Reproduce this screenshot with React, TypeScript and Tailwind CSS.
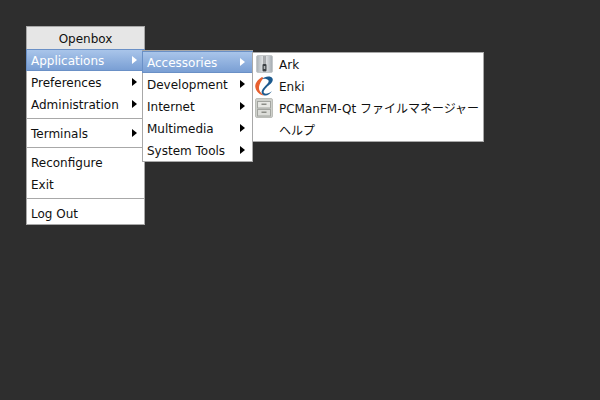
const arrow = (color: string) => (
  <svg width="5" height="8" viewBox="0 0 5 8" className="shrink-0">
    <path d="M0 0L5 4L0 8Z" fill={color} />
  </svg>
);

const Row = ({ label, active, sub }: { label: string; active?: boolean; sub?: boolean }) => (
  <div
    className={
      active
        ? 'flex h-[22px] items-center justify-between pl-[4px] pr-[7px] text-white bg-gradient-to-b from-[#a9c5ea] to-[#7a9fd4] border border-[#6a90c6] -mx-px'
        : 'flex h-[22px] items-center justify-between pl-[4px] pr-[7px] text-[#101010]'
    }
  >
    <span className="pt-[2px]">{label}</span>
    {sub && arrow(active ? '#ffffff' : '#000000')}
  </div>
);

const Sep = () => <div className="my-[3px] h-px bg-[#a8a8a8]" />;

const ArkIcon = () => (
  <svg width="17" height="18" viewBox="0 0 17 18">
    <defs>
      <linearGradient id="ark" x1="0" x2="1" y1="0" y2="0">
        <stop offset="0" stopColor="#a9b0b5" />
        <stop offset="0.5" stopColor="#eceef0" />
        <stop offset="1" stopColor="#a2a9af" />
      </linearGradient>
    </defs>
    <rect x="0.5" y="0.5" width="16" height="17" rx="1.5" fill="url(#ark)" stroke="#c4c8ca" />
    <path d="M7 2H10M7 4H10M7 6H10M7 8H10" stroke="#6a6f73" strokeWidth="1.1" />
    <rect x="6.5" y="9" width="4" height="7.5" rx="1" fill="#3b4044" />
    <rect x="7.7" y="11" width="1.6" height="3" fill="#b4b8bb" />
  </svg>
);

const EnkiIcon = () => (
  <svg width="21" height="20" viewBox="0 0 21 20" fill="none">
    <path d="M8 1C3 4 0.5 8 1.5 12C2.5 16 6 19 10 19.5C6.5 17 4.5 14 5 11C5.5 8 7 5 9.5 2Z" fill="#e8602f" />
    <path d="M8 3C11 0 17 -0.5 18.5 2.5C20 6 15 9 12.5 11.5C10 14 9 16 10 17C11.5 18.5 15 17.5 18 15C16 18.5 12 20.5 9.5 19C7 17.5 7 15 9.5 12C12 9 15.5 6.5 14.5 4.5C13.5 2.5 10 2.5 8 3Z" fill="#1c5a8e" />
  </svg>
);

const FilesIcon = () => (
  <svg width="18" height="20" viewBox="0 0 18 20">
    <rect x="0.5" y="0.5" width="17" height="19" rx="1.5" fill="#cfd1cc" stroke="#bcbeb9" />
    <rect x="2.5" y="3.5" width="13" height="6.5" fill="#e6e7e3" stroke="#a2a49f" />
    <rect x="2.5" y="11.5" width="13" height="6.5" fill="#dcddd9" stroke="#a2a49f" />
    <rect x="6.5" y="5.5" width="5" height="1.5" fill="#8b8d87" />
    <rect x="6.5" y="13.5" width="5" height="1.5" fill="#8b8d87" />
  </svg>
);

const AppRow = ({ label, icon }: { label: string; icon?: React.ReactNode }) => (
  <div className="flex h-[22px] items-center whitespace-nowrap text-[#101010]">
    <div className="mr-[4px] flex w-[22px] shrink-0 justify-center">{icon}</div>
    <span className="pt-[2px]">{label}</span>
  </div>
);

export default function App() {
  return (
    <div
      className="relative h-[400px] w-[600px] overflow-hidden bg-[#2e2e2e] text-[12px] leading-none"
      style={{ fontFamily: '"DejaVu Sans", "Noto Sans CJK JP", sans-serif' }}
    >
      <div className="absolute left-[26px] top-[26px] w-[119px] border border-[#a8a8a8] bg-white">
        <div className="flex h-[22px] items-center justify-center bg-[#e6e6e6] pt-[2px] text-[#101010]">Openbox</div>
        <Row label="Applications" active sub />
        <Row label="Preferences" sub />
        <Row label="Administration" sub />
        <Sep />
        <Row label="Terminals" sub />
        <Sep />
        <Row label="Reconfigure" />
        <Row label="Exit" />
        <Sep />
        <Row label="Log Out" />
      </div>
      <div className="absolute left-[142px] top-[50px] w-[111px] border border-[#a8a8a8] bg-white">
        <Row label="Accessories" active sub />
        <Row label="Development" sub />
        <Row label="Internet" sub />
        <Row label="Multimedia" sub />
        <Row label="System Tools" sub />
      </div>
      <div className="absolute left-[252px] top-[52px] w-[232px] border border-[#a8a8a8] bg-white">
        <AppRow label="Ark" icon={<ArkIcon />} />
        <AppRow label="Enki" icon={<EnkiIcon />} />
        <AppRow label="PCManFM-Qt ファイルマネージャー" icon={<FilesIcon />} />
        <AppRow label="ヘルプ" />
      </div>
    </div>
  );
}
